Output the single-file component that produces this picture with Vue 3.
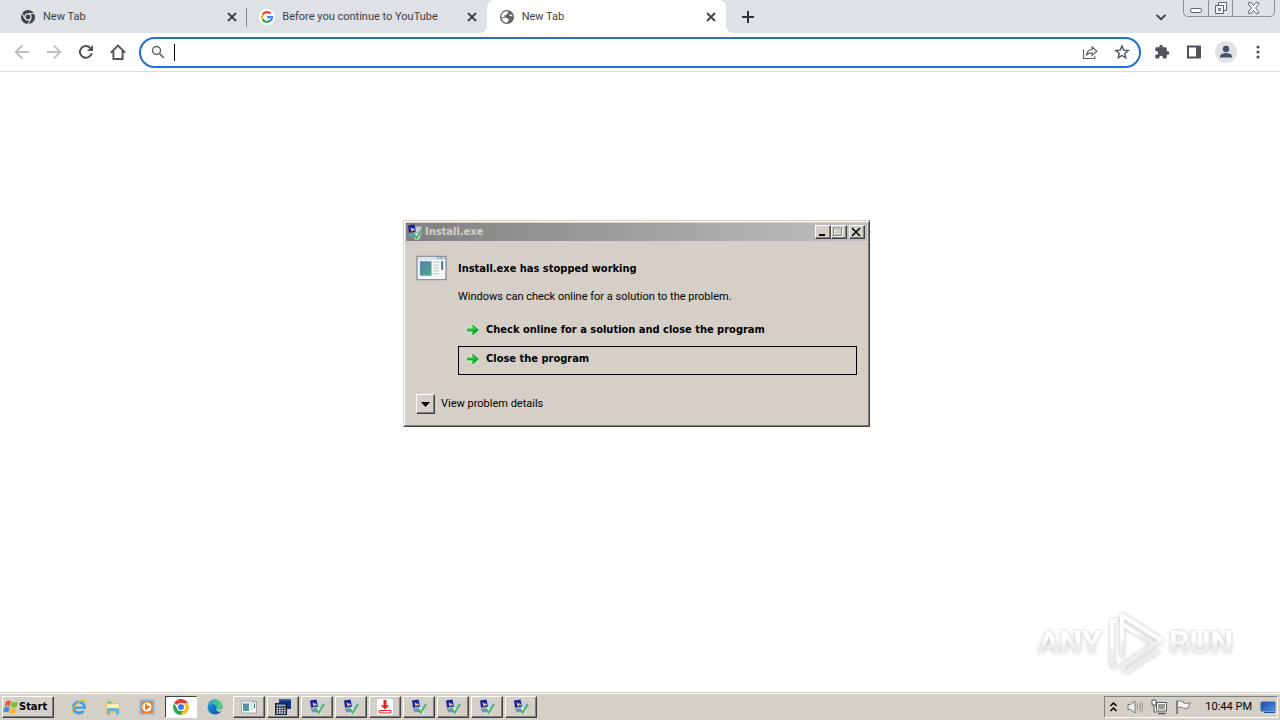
<script setup>
import { ref } from 'vue'

const address = ref('')
const tabs = [
  { title: 'New Tab', icon: 'i-chromegray', active: false },
  { title: 'Before you continue to YouTube', icon: 'i-google', active: false },
  { title: 'New Tab', icon: 'i-globe', active: true },
]
const nav = [
  { label: 'Back', icon: 'i-back', dim: true },
  { label: 'Forward', icon: 'i-forward', dim: true },
  { label: 'Reload', icon: 'i-reload' },
  { label: 'Home', icon: 'i-home' },
]
const tools = [
  { label: 'Extensions', icon: 'i-puzzle' },
  { label: 'Side panel', icon: 'i-panel' },
  { label: 'Profile', icon: 'i-avatar' },
  { label: 'Menu', icon: 'i-dots' },
]
const tasks = [
  { label: 'Internet Explorer', icon: 'i-ie', kind: 'flat' },
  { label: 'Explorer', icon: 'i-folder', kind: 'flat' },
  { label: 'Media Player', icon: 'i-media', kind: 'flat' },
  { label: 'Chrome', icon: 'i-chrome', kind: 'pressed' },
  { label: 'Edge', icon: 'i-edge', kind: 'flat' },
  { label: 'Application', icon: 'i-app', kind: 'raised' },
  { label: 'Calculator', icon: 'i-calc', kind: 'raised' },
  { label: 'Installer 1', icon: 'i-setup', kind: 'raised' },
  { label: 'Installer 2', icon: 'i-setup', kind: 'raised' },
  { label: 'Downloader', icon: 'i-download', kind: 'raised' },
  { label: 'Installer 3', icon: 'i-setup', kind: 'raised' },
  { label: 'Installer 4', icon: 'i-setup', kind: 'raised' },
  { label: 'Installer 5', icon: 'i-setup', kind: 'raised' },
  { label: 'Installer 6', icon: 'i-setup', kind: 'raised' },
]
const tray = [
  { label: 'Volume', icon: 'i-volume' },
  { label: 'Network', icon: 'i-network' },
  { label: 'Action center', icon: 'i-flag' },
]
</script>

<template>
  <div class="screen">
    <svg class="defs" aria-hidden="true">
      <defs>
        <linearGradient id="g-app" x1="0" y1="0" x2="1" y2="1">
          <stop offset="0" stop-color="#5a7fae" /><stop offset="1" stop-color="#4fa98b" />
        </linearGradient>
        <linearGradient id="g-edge" x1="0" y1="0" x2="1" y2="1">
          <stop offset="0" stop-color="#1b9de2" /><stop offset="1" stop-color="#0b4fa0" />
        </linearGradient>
        <linearGradient id="g-edge2" x1="0" y1="0" x2="1" y2="0">
          <stop offset="0" stop-color="#1f9fe0" /><stop offset="1" stop-color="#5fd36a" />
        </linearGradient>
        <linearGradient id="g-screen" x1="0" y1="0" x2="1" y2="1">
          <stop offset="0" stop-color="#1546a8" /><stop offset="1" stop-color="#4d9bea" />
        </linearGradient>
        <linearGradient id="g-mark" x1="0" y1="0" x2="0" y2="1">
          <stop offset="0.45" stop-color="#ffffff" /><stop offset="0.6" stop-color="#ededed" />
        </linearGradient>
      </defs>
      <symbol id="i-chromegray" viewBox="0 0 16 16">
        <circle cx="8" cy="8" r="7" fill="#3c4047" />
        <circle cx="8" cy="8" r="3.7" fill="#dee1e6" /><circle cx="8" cy="8" r="2.4" fill="#3c4047" />
        <path d="M8 4.5h6.4M5 9.8 1.8 4.3M11 9.8l-3.2 5.4" stroke="#dee1e6" stroke-width="1.1" />
      </symbol>
      <symbol id="i-google" viewBox="0 0 16 16">
        <circle cx="8" cy="8" r="8" fill="#fff" />
        <g fill="none" stroke-width="2.2">
          <path d="M11.7 4.6A5 5 0 0 0 3.7 5.6" stroke="#ea4335" />
          <path d="M3.7 5.5a5 5 0 0 0 0 5" stroke="#fbbc05" />
          <path d="M3.7 10.4a5 5 0 0 0 7.6 1.3" stroke="#34a853" />
          <path d="M11.2 11.8A5 5 0 0 0 13 8.1H8" stroke="#4285f4" />
        </g>
      </symbol>
      <symbol id="i-globe" viewBox="0 0 16 16">
        <circle cx="8" cy="8" r="7" fill="#5f6368" />
        <path d="M9.500 2.200C8.200 3 8.600 4 9 4.500 8 4.800 7.200 5.300 7.200 6.300H5.400v1.600H2.300C2.200 5 4.600 2.200 8 2.200zM2.500 8.700h4.300c1.500.2 1.700 1.500 3 1.600v1.500c-1.100.2-1.300 1-1.500 1.900C5.300 13.800 2.900 11.600 2.500 8.700z" fill="#fff" />
        <path d="M10.300 6.200h1.600c.6.600 1 .9 1.700.8" fill="none" stroke="#fff" stroke-width="1.200" />
      </symbol>
      <symbol id="i-x" viewBox="0 0 16 16"><path d="m4 4 8 8M12 4l-8 8" stroke="#3c4043" stroke-width="1.800" /></symbol>
      <symbol id="i-plus" viewBox="0 0 16 16"><path d="M8 2v12M2 8h12" stroke="#303338" stroke-width="2" /></symbol>
      <symbol id="i-down" viewBox="0 0 16 16"><path d="m3.500 5.800 4.500 4.400 4.500-4.400" fill="none" stroke="#3c4043" stroke-width="1.800" /></symbol>
      <symbol id="i-back" viewBox="0 0 16 16"><path d="M15 8H2M8.200 1.500 1.700 8l6.500 6.500" fill="none" stroke="#bdc0c3" stroke-width="1.800" /></symbol>
      <symbol id="i-forward" viewBox="0 0 16 16"><path d="M1 8h13M7.800 1.500 14.300 8l-6.500 6.500" fill="none" stroke="#bdc0c3" stroke-width="1.800" /></symbol>
      <symbol id="i-reload" viewBox="0 0 16 16"><path d="M13.600 9.200A5.900 5.900 0 1 1 12.300 4" fill="none" stroke="#505357" stroke-width="2" /><path d="M15 1v6H9z" fill="#505357" /></symbol>
      <symbol id="i-home" viewBox="0 0 16 16"><path d="M.8 8.600 8 1.500l7.200 7.100M3.400 7v8h9.200V7" fill="none" stroke="#505357" stroke-width="1.900" /></symbol>
      <symbol id="i-search" viewBox="0 0 16 16"><circle cx="6.500" cy="6.500" r="4" fill="none" stroke="#5f6368" stroke-width="1.500" /><path d="m9.500 9.500 4.300 4.300" stroke="#5f6368" stroke-width="1.700" /></symbol>
      <symbol id="i-share" viewBox="0 0 16 16"><path d="M1.500 5.500v9h11.300v-2.300M4.500 11c.3-3.400 2-5.200 5.600-5.500V2.800l4.800 4.500-4.800 4.200V8.800c-2.600 0-4.200.6-5.600 2.200z" fill="none" stroke="#5f6368" stroke-width="1.200" /></symbol>
      <symbol id="i-star" viewBox="0 0 16 16"><path d="m8 2 1.700 4.100 4.500.4-3.400 2.900 1 4.400L8 11.500l-3.800 2.300 1-4.400-3.400-2.900 4.500-.4z" fill="none" stroke="#505357" stroke-width="1.400" /></symbol>
      <symbol id="i-puzzle" viewBox="0 0 16 16"><path d="M13.700 7.300h-1V4.600c0-.8-.6-1.300-1.300-1.300H8.700v-.9a1.700 1.700 0 0 0-3.400 0v.9H2.600c-.7 0-1.300.5-1.300 1.300v2.500h1a1.800 1.800 0 0 1 0 3.600h-1v2.600c0 .7.600 1.300 1.300 1.300h2.600v-1a1.800 1.800 0 0 1 3.600 0v1h2.600c.7 0 1.300-.6 1.300-1.300v-2.600h1a1.700 1.700 0 0 0 0-3.400z" fill="#505357" /></symbol>
      <symbol id="i-panel" viewBox="0 0 16 16"><path d="M2 2.500h12v11H2z" fill="none" stroke="#505357" stroke-width="2" /><path d="M10 2h4.500v12H10z" fill="#505357" /></symbol>
      <symbol id="i-avatar" viewBox="0 0 22 22"><circle cx="11" cy="11" r="11" fill="#dfe1e5" /><circle cx="11" cy="8" r="3.200" fill="#46506b" /><path d="M5 16.500v-1.200c0-2.100 3.900-3.200 6-3.200s6 1.100 6 3.200v1.200z" fill="#46506b" /></symbol>
      <symbol id="i-dots" viewBox="0 0 16 16"><g fill="#505357"><circle cx="8" cy="3" r="1.600" /><circle cx="8" cy="8" r="1.600" /><circle cx="8" cy="13" r="1.600" /></g></symbol>
      <symbol id="i-setup" viewBox="0 0 16 16">
        <path d="M8 2.500h6.500l.5 6H8z" fill="#c3d1dc" /><path d="M6 9h8l-2 6.500H8z" fill="#d6ece0" />
        <path d="M1 1.500 7.500.5l1.500 7-7 1.300z" fill="#1a1f96" />
        <path d="m3.500 3 3.500 3-2.500 1.500z" fill="#f1e046" /><path d="m6 4.500 2 1.800" stroke="#fff" />
        <path d="M1.500 10 8 8.800l.5 4.200-5 .3z" fill="#6f97b4" />
        <path d="m6.500 10 3.200 3.800L15 5" fill="none" stroke="#4fae70" stroke-width="2" />
      </symbol>
      <symbol id="i-flagwin" viewBox="0 0 16 16">
        <path d="M3 2.500C5 1 6.500 1.300 8 2.200L6.800 7.300C5 6.300 3.500 6.400 1.700 7.500z" fill="#e8582c" />
        <path d="M9 2.700c2 1 3.800 1 6 0l-1.300 5c-2.200 1-4 .9-5.900-.1z" fill="#7bbf3a" />
        <path d="M1.400 8.600c2-1 3.500-1 5.200-.1L5.300 13.500C3.500 12.500 2 12.600 0 13.600z" fill="#3a8ddb" />
        <path d="M7.600 8.900c2 1 3.700 1 5.900.1l-1.300 5c-2.200 1-4 .9-5.900-.1z" fill="#f7b928" />
      </symbol>
      <symbol id="i-ie" viewBox="0 0 16 16">
        <circle cx="8" cy="8.500" r="5.500" fill="none" stroke="#3f9fe0" stroke-width="2.800" />
        <path d="M4 8.700h9" stroke="#3f9fe0" stroke-width="2.200" /><path d="M9.500 9.900H16v2.300l-3.500-.2z" fill="#d4d0c8" />
        <path d="M1.500 14.800C-1 12.500 3.500 5.700 9 2.600c3.200-1.800 7-2 5.700 1.200" fill="none" stroke="#e9b93b" stroke-width="1.400" />
      </symbol>
      <symbol id="i-folder" viewBox="0 0 16 16">
        <path d="M1 2h6l1 2h7v10H1z" fill="#e8c766" /><path d="M2 5h12v4H2z" fill="#fbf0b6" /><path d="M3 3.500h3" stroke="#5aa65e" stroke-width="1.500" />
        <path d="M2 15.500v-5l1.800-1.600h8.400l1.800 1.600v5h-3v-3.300H5v3.300z" fill="#6cb1dc" />
      </symbol>
      <symbol id="i-media" viewBox="0 0 16 16">
        <path d="M.5.500h15v15H.5z" fill="#86b3e0" /><path d="M2.500 2.500h11v11.500h-11z" fill="#f07e18" />
        <circle cx="8" cy="8" r="4.600" fill="#fff" /><path d="m6 4.600 5.500 3.400L6 11.400z" fill="#f07e18" />
      </symbol>
      <symbol id="i-chrome" viewBox="0 0 16 16">
        <path d="M1.100 4A8 8 0 0 1 14.900 4H8a4 4 0 0 0-3.500 2z" fill="#e33b2e" />
        <path d="M1.100 4A8 8 0 0 0 8 16l3.460-6A4 4 0 0 1 4.500 10z" fill="#2da94f" />
        <path d="M14.900 4A8 8 0 0 1 8 16l3.460-6A4 4 0 0 0 11.500 6L10 4z" fill="#fcc31e" />
        <circle cx="8" cy="8" r="4" fill="#fff" /><circle cx="8" cy="8" r="3" fill="#3f7fe8" />
      </symbol>
      <symbol id="i-edge" viewBox="0 0 16 16">
        <circle cx="8" cy="8" r="7.500" fill="url(#g-edge)" />
        <path d="M.8 6.500C2 2 5 .5 8 .5c4.600 0 7.500 3.300 7.500 6.300 0 2.400-2 3.700-4 3.700-1.700 0-2.700-.6-2-1.700C10.500 6.700 8 5.200 5.500 5.200 3.500 5.200 1.500 6 .8 6.500z" fill="url(#g-edge2)" />
        <path d="M9.500 8.800c-.7 1.100.3 1.700 2 1.700 1.500 0 2.800-.6 3.500-1.600l.5 1.500-2 2c-3 .2-5-1-4-3.600z" fill="#d4d0c8" />
      </symbol>
      <symbol id="i-app" viewBox="0 0 32 26">
        <path d="M1 1h30v24H1z" fill="#f7f8f9" stroke="#8b9399" stroke-width="1.500" /><path d="M2 2h28v2.500H2z" fill="#d5e2ee" />
        <path d="M4 6h12v15H4z" fill="url(#g-app)" /><path d="M18 7h6M18 10h6M18 13h6M18 16h6M18 19h6" stroke="#b9bcc0" />
        <path d="M27 6v9" stroke="#35749a" stroke-width="2" /><path d="M22 2.800h2m1 0h2m1 0h1" stroke="#5a7da4" stroke-width="1.500" />
      </symbol>
      <symbol id="i-calc" viewBox="0 0 16 16">
        <path d="M4 0h12v10H4z" fill="#12347c" /><path d="M4 1h12" stroke="#315ba9" stroke-width="2" /><path d="M0 4h12v12H0z" fill="#17213c" />
        <path d="M1.500 5.500h9v2h-9z" fill="#9aabc8" /><path d="M1.500 9.500h9M1.500 11.700h9M1.500 14h9" stroke="#fff" stroke-width="1.500" stroke-dasharray="1.700 .8" />
      </symbol>
      <symbol id="i-download" viewBox="0 0 16 16">
        <rect width="16" height="16" rx="2" fill="#fff" /><path d="M6.500 1h3v5.200h2.700L8 10.600 3.800 6.200h2.700z" fill="#e3242b" />
        <rect x="2" y="11.500" width="12" height="2.500" rx="1.200" fill="none" stroke="#e3242b" stroke-width="1.200" />
      </symbol>
      <symbol id="i-volume" viewBox="0 0 16 16"><path d="M1 5.500h2.500L8 2v12l-4.500-3.500H1z" fill="#f2f2f0" stroke="#777" /><path d="M10 5.500c1 1.500 1 3.500 0 5M12 4c2 2.500 2 5.500 0 8M14 2.500c2.400 3.500 2.400 7.500 0 11" fill="none" stroke="#888" /></symbol>
      <symbol id="i-network" viewBox="0 0 16 16"><path d="M5.500 3.500h10v8.500h-10z" fill="#9a9a98" stroke="#555" /><path d="M6.500 4.500h8v6.500h-8z" fill="none" stroke="#fff" /><path d="M7 14.500h7.500" stroke="#555" stroke-width="1.500" /><path d="M1 1h4v5H1zM3 6v7h3" fill="#fff" stroke="#555" /></symbol>
      <symbol id="i-flag" viewBox="0 0 16 16"><path d="M2 1.500V15" stroke="#666" stroke-width="1.500" /><path d="M2.500 2c3-1 4 1.200 6 .7V4c2 .7 4.500.4 6.500-.5l-2 5.500c-2 .9-4.500.5-5.500-.3-1.500-.3-3-.7-5 0z" fill="#f4f4f2" stroke="#777" /></symbol>
      <symbol id="i-arrow" viewBox="0 0 16 16"><path d="M1.500 6h6l-2-3.200h3.300L14.600 8l-5.800 5.200H5.500l2-3.200h-6z" fill="#14a82f" stroke="#d9eed7" stroke-width="1" /><path d="M3 7.200h7.500L8 4.300" fill="none" stroke="#52cf57" /></symbol>
    </svg>

    <header class="strip">
      <nav class="tabs">
        <div v-for="(t, i) in tabs" :key="i" class="tab" :class="{ active: t.active }">
          <svg class="ic16"><use :href="'#' + t.icon" /></svg>
          <span class="tab-title">{{ t.title }}</span>
          <button class="plain" aria-label="Close tab"><svg class="ic16"><use href="#i-x" /></svg></button>
        </div>
      </nav>
      <button class="plain new-tab" aria-label="New tab"><svg class="ic16"><use href="#i-plus" /></svg></button>
      <button class="plain search-tabs" aria-label="Search tabs"><svg class="ic16"><use href="#i-down" /></svg></button>
      <div class="win-controls">
        <button aria-label="Minimize"><svg width="12" height="12"><rect x=".5" y="6.500" width="11" height="4" rx="1.500" fill="#fff" stroke="#5d626b" /></svg></button>
        <button aria-label="Restore"><svg width="14" height="14"><path d="M4.500 1.500h8v8h-8z" fill="#fff" stroke="#5d626b" /><path d="M1.500 4.500h8v8h-8z" fill="#fff" stroke="#5d626b" /><path d="M4.500 7.500h2v2h-2z" fill="none" stroke="#5d626b" /></svg></button>
        <button aria-label="Close"><svg width="13" height="12"><path d="M1.500.7h2.800L6.500 3.500 8.700.7h2.800v1.500L8.600 6l2.900 3.800v1.500H8.700L6.500 8.500l-2.200 2.800H1.500V9.800L4.400 6 1.500 2.200z" fill="#fff" stroke="#5d626b" /></svg></button>
      </div>
    </header>

    <div class="toolbar">
      <button v-for="n in nav" :key="n.label" class="plain tool" :aria-label="n.label"><svg class="ic16"><use :href="'#' + n.icon" /></svg></button>
      <div class="omnibox">
        <svg class="ic16"><use href="#i-search" /></svg>
        <span class="caret"></span>
        <input v-model="address" type="text" aria-label="Address and search bar" />
        <button class="plain tool" aria-label="Share"><svg class="ic16"><use href="#i-share" /></svg></button>
        <button class="plain tool" aria-label="Bookmark"><svg class="ic16"><use href="#i-star" /></svg></button>
      </div>
      <button v-for="n in tools" :key="n.label" class="plain tool" :aria-label="n.label">
        <svg :class="n.icon === 'i-avatar' ? 'ic22' : 'ic16'"><use :href="'#' + n.icon" /></svg>
      </button>
    </div>

    <main class="page">
      <section class="dialog" role="dialog" aria-labelledby="dialog-title">
        <div class="titlebar">
          <svg class="ic16"><use href="#i-setup" /></svg>
          <span id="dialog-title">Install.exe</span>
          <button class="cap" aria-label="Minimize"><svg width="12" height="10"><path d="M3 8h6" stroke="#000" stroke-width="2" /></svg></button>
          <button class="cap" aria-label="Maximize" disabled><svg width="12" height="10"><path d="M2.500 1.500h8v8h-8z" fill="none" stroke="#fff" /><path d="M1.500 1h8v7.500h-8z" fill="none" stroke="#808080" /></svg></button>
          <button class="cap last" aria-label="Close"><svg width="12" height="10"><path d="m2 1 8 8M10 1 2 9" stroke="#000" stroke-width="1.600" /></svg></button>
        </div>
        <div class="body">
          <svg class="app-icon"><use href="#i-app" /></svg>
          <div class="message">
            <h1>Install.exe has stopped working</h1>
            <p>Windows can check online for a solution to the problem.</p>
            <button class="command"><svg class="ic16"><use href="#i-arrow" /></svg>Check online for a solution and close the program</button>
            <button class="command focused"><svg class="ic16"><use href="#i-arrow" /></svg>Close the program</button>
          </div>
        </div>
        <div class="details">
          <button id="details-toggle" aria-labelledby="details-label"><svg width="9" height="5"><path d="M0 0h9L4.500 5z" /></svg></button>
          <label id="details-label" for="details-toggle">View problem details</label>
        </div>
      </section>

      <svg class="watermark" viewBox="0 0 204 70" role="img" aria-label="ANY RUN">
        <g fill="url(#g-mark)">
          <text x="3" y="46">ANY</text>
          <text x="134" y="46">RUN</text>
        </g>
        <g fill="none" stroke="url(#g-mark)" stroke-width="4" stroke-linejoin="round">
          <path d="M87 50V8l39 25-39 26" />
          <path d="M82 14h-5v45h5M87 59l4 6 33-22" />
          <path d="m87 17 32 20" />
        </g>
      </svg>
    </main>

    <footer class="taskbar">
      <button class="start"><svg class="ic16"><use href="#i-flagwin" /></svg>Start</button>
      <div class="tasks">
        <button v-for="t in tasks" :key="t.label" :class="['task', t.kind]" :aria-label="t.label"><svg class="ic16"><use :href="'#' + t.icon" /></svg></button>
      </div>
      <div class="tray">
        <button class="plain more" aria-label="Show hidden icons"><svg width="7" height="10"><path d="m.5 4 3-3 3 3M.5 9l3-3 3 3" fill="none" stroke="#000" stroke-width="1.500" /></svg></button>
        <button v-for="t in tray" :key="t.label" class="plain" :aria-label="t.label"><svg class="ic16"><use :href="'#' + t.icon" /></svg></button>
        <time>10:44 PM</time>
        <button class="plain" aria-label="Show desktop"><svg class="ic16" viewBox="0 0 16 16"><path d="M1 3h14v9H1z" fill="url(#g-screen)" stroke="#3d67a6" /><path d="M4 13.500h11" stroke="#234a8a" /></svg></button>
      </div>
    </footer>
  </div>
</template>

<style>
body {
  margin: 0;
}
</style>

<style scoped>
.screen {
  display: flex;
  flex-direction: column;
  height: 100vh;
  overflow: hidden;
  background: #fff;
  color: #000;
  font: 11px/14px "DejaVu Sans Condensed", "DejaVu Sans", sans-serif;
}
.screen button,
.screen input {
  margin: 0;
  padding: 0;
  border: 0;
  background: none;
  font: inherit;
  color: inherit;
}
svg {
  display: block;
  flex: none;
}
.defs {
  position: absolute;
  width: 0;
  height: 0;
}
.ic16 {
  width: 16px;
  height: 16px;
}
.ic22 {
  width: 22px;
  height: 22px;
}
.strip {
  display: flex;
  height: 33px;
  padding: 0 5px 0 8px;
  background: #dee1e6;
}
.tabs {
  display: flex;
  flex: 0 1 718px;
}
.tab {
  position: relative;
  display: flex;
  flex: 1 1 0;
  min-width: 0;
  align-items: center;
  gap: 7px;
  padding: 0 7px 0 12px;
  color: #3c4043;
  font: 11px/14px Roboto, sans-serif;
}
.tab:first-child::after {
  content: "";
  position: absolute;
  right: 0;
  top: 8px;
  width: 1px;
  height: 19px;
  background: #80848a;
}
.tab-title {
  flex: 1;
  white-space: nowrap;
}
.tab.active {
  background: #fff;
  border-radius: 8px 8px 0 0;
}
.tab.active::before,
.tab.active::after {
  content: "";
  position: absolute;
  bottom: 0;
  width: 8px;
  height: 8px;
}
.tab.active::before {
  right: 100%;
  background: radial-gradient(circle at 0 0, transparent 8px, #fff 8px);
}
.tab.active::after {
  left: 100%;
  background: radial-gradient(circle at 100% 0, transparent 8px, #fff 8px);
}
.new-tab {
  margin-left: 14px !important;
}
.search-tabs {
  margin: 0 14px 0 auto !important;
}
.win-controls {
  display: flex;
  height: 16px;
  border: 1px solid #8c9097;
  border-top: 0;
  border-radius: 0 0 5px 5px;
}
.win-controls button {
  display: flex;
  align-items: center;
  justify-content: center;
  width: 24px;
}
.win-controls button + button {
  border-left: 1px solid #8c9097;
}
.win-controls button:last-child {
  width: 42px;
}
.toolbar {
  display: flex;
  align-items: center;
  height: 38px;
  padding: 0 6px;
  border-bottom: 1px solid #dcdde0;
}
.tool {
  display: flex;
  justify-content: center;
  width: 32px;
}
.omnibox {
  display: flex;
  flex: 1;
  align-items: center;
  height: 27px;
  margin: 0 5px;
  padding: 0 0 0 9px;
  border: 2px solid #2170cf;
  border-radius: 16px;
}
.omnibox .tool:last-child {
  margin-right: 1px;
}
.caret {
  width: 1px;
  height: 17px;
  margin-left: 8px;
  background: #000;
}
.omnibox input {
  flex: 1;
  min-width: 0;
  outline: 0;
}
.page {
  position: relative;
  flex: 1;
}
.dialog {
  position: absolute;
  left: 403px;
  top: 148px;
  width: 461px;
  padding: 2px;
  background: #d5cfc8;
  border: 1px solid;
  border-color: #d4d0c8 #404040 #404040 #d4d0c8;
  box-shadow: inset 1px 1px #fff, inset -1px -1px #808080;
}
.titlebar {
  display: flex;
  align-items: center;
  height: 18px;
  padding: 0 2px 0 1px;
  background: linear-gradient(90deg, #808080, #c0c0c0);
  color: #d4d0c8;
  font-weight: bold;
}
.titlebar span {
  flex: 1;
  margin-left: 2px;
}
.screen .cap,
.details button,
.start,
.task.raised {
  background: #d4d0c8;
  border: 1px solid !important;
  border-color: #fff #404040 #404040 #fff !important;
  box-shadow: inset -1px -1px #808080;
}
.cap {
  width: 16px;
  height: 14px;
}
.cap.last {
  margin-left: 2px !important;
}
.body {
  display: flex;
  gap: 11px;
  padding: 14px 10px 0;
}
.app-icon {
  width: 31px;
  height: 26px;
}
.message {
  flex: 1;
}
h1 {
  margin: 7px 0 14px;
  font: bold 11px/14px "DejaVu Sans Condensed", "DejaVu Sans", sans-serif;
}
p {
  margin: 0 0 13px;
  font: 11px/14px Roboto, sans-serif;
}
.screen .command {
  display: flex;
  align-items: center;
  gap: 5px;
  width: 100%;
  height: 29px;
  padding: 0 6px 3px;
  border: 1px solid transparent;
  font-weight: bold;
}
.screen .command.focused {
  border-color: #000;
}
.details {
  display: flex;
  align-items: center;
  gap: 6px;
  padding: 19px 10px 10px;
  font: 11px/14px Roboto, sans-serif;
}
.details button {
  display: flex;
  align-items: center;
  justify-content: center;
  width: 19px;
  height: 20px;
}
.watermark {
  position: absolute;
  right: 41px;
  bottom: 16px;
  width: 204px;
  height: 70px;
  filter: drop-shadow(0 0 2px #c4c4c4);
}
.watermark text {
  font: bold 32px Roboto, sans-serif;
}
.taskbar {
  display: flex;
  align-items: center;
  height: 22px;
  padding: 2px;
  border-top: 1px solid #fff;
  background: #d4d0c8;
  box-shadow: 0 -1px #d4d0c8;
}
.start {
  display: flex;
  align-items: center;
  width: 52px;
  height: 22px;
  font-weight: bold !important;
}
.tasks {
  display: flex;
  flex: 1;
  gap: 2px;
  margin-left: 9px;
}
.task {
  display: flex;
  align-items: center;
  justify-content: center;
  width: 32px;
  height: 22px;
}
.task.pressed {
  background: #fff;
  border: 1px solid !important;
  border-color: #404040 #fff #fff #404040 !important;
}
.tray {
  display: flex;
  align-items: center;
  gap: 8px;
  height: 20px;
  padding: 0 1px 0 5px;
  border: 1px solid;
  border-color: #808080 #fff #fff #808080;
}
.more {
  margin-right: 2px !important;
}
.tray time {
  margin: 0 0 0 6px;
  font: 11px/14px Roboto, sans-serif;
}
</style>
